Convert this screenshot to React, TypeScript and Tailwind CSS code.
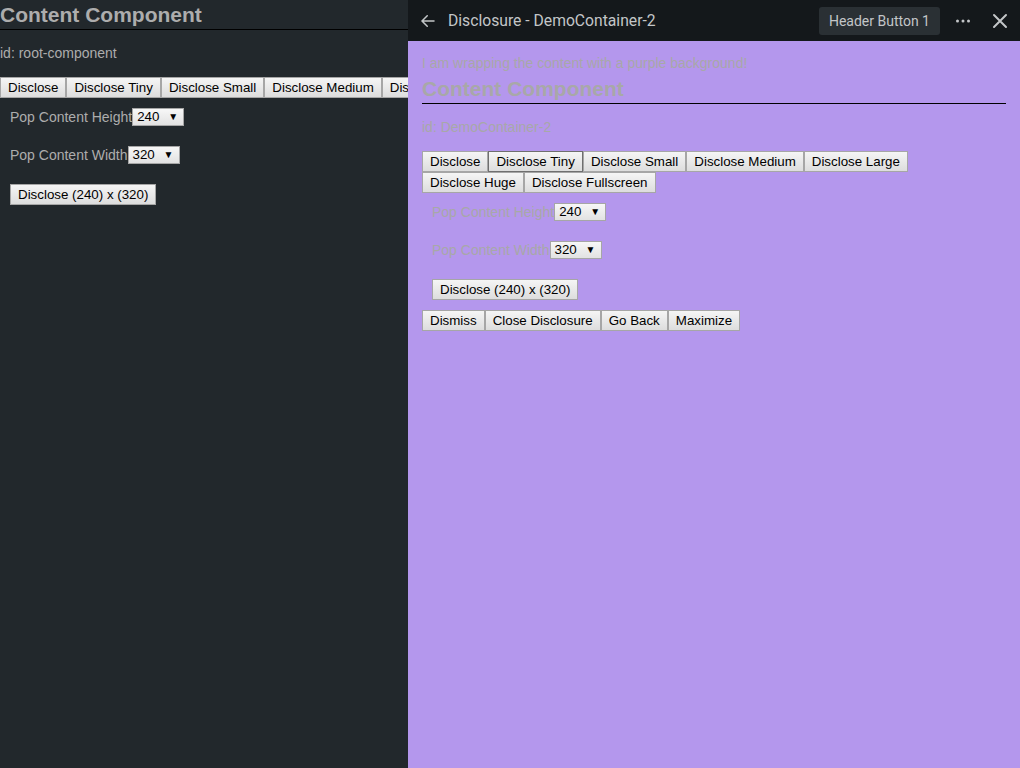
import { ReactNode } from "react";

// ─── Native-looking controls ─────────────────────────────────────────────────
function Btn({ children, focused = false }: { children: ReactNode; focused?: boolean }) {
  return (
    <button
      className={
        "h-[21px] shrink-0 whitespace-nowrap border bg-linear-to-b from-[#f5f5f5] to-[#dddddd] px-[7px] text-[13.33px] leading-[16px] text-black " +
        (focused ? "border-[#6f6f6f]" : "border-[#a6a6a6]")
      }
    >
      {children}
    </button>
  );
}

function FakeSelect({ value }: { value: string }) {
  return (
    <span className="flex h-[18px] w-[52px] items-center justify-between border border-[#a6a6a6] bg-linear-to-b from-[#f7f7f7] to-[#e2e2e2] pl-[4px] pr-[5px] text-[13.33px] leading-[16px] text-black">
      <span>{value}</span>
      <span className="text-[10px]">▼</span>
    </span>
  );
}

const ALL_BUTTONS = [
  "Disclose",
  "Disclose Tiny",
  "Disclose Small",
  "Disclose Medium",
  "Disclose Large",
  "Disclose Huge",
  "Disclose Fullscreen",
];

// ─── Content block (used on page and inside disclosure) ──────────────────────
function ContentComponent({ id, wrap, buttons }: { id: string; wrap: boolean; buttons: string[] }) {
  return (
    <div>
      <h2 className="border-b border-black pb-[2px] text-[21px] font-bold leading-[24px]">
        Content Component
      </h2>
      <p className="mt-[15px]">id: {id}</p>
      <div className={"mt-[16px] flex " + (wrap ? "flex-wrap" : "flex-nowrap")}>
        {buttons.map((b) => (
          <Btn key={b} focused={wrap && b === "Disclose Tiny"}>
            {b}
          </Btn>
        ))}
      </div>
      <div className="flex flex-col items-start gap-[20px] pl-[10px] pt-[10px]">
        <div className="flex items-center">
          <span>Pop Content Height</span>
          <FakeSelect value="240" />
        </div>
        <div className="flex items-center">
          <span>Pop Content Width</span>
          <FakeSelect value="320" />
        </div>
        <Btn>Disclose (240) x (320)</Btn>
      </div>
    </div>
  );
}

// ─── Header icons ────────────────────────────────────────────────────────────
function BackIcon() {
  return (
    <svg width="18" height="18" viewBox="0 0 24 24" fill="none" stroke="currentColor" strokeWidth="2" strokeLinecap="round">
      <path d="M20 12H4M11 5l-7 7 7 7" />
    </svg>
  );
}

function DotsIcon() {
  return (
    <svg width="16" height="16" viewBox="0 0 16 16" fill="currentColor">
      <circle cx="2.5" cy="8" r="1.5" />
      <circle cx="8" cy="8" r="1.5" />
      <circle cx="13.5" cy="8" r="1.5" />
    </svg>
  );
}

function CloseIcon() {
  return (
    <svg width="16" height="16" viewBox="0 0 16 16" fill="none" stroke="currentColor" strokeWidth="2" strokeLinecap="round">
      <path d="M2 2l12 12M14 2L2 14" />
    </svg>
  );
}

// ─── Main ────────────────────────────────────────────────────────────────────
export default function App() {
  return (
    <div className="flex h-[768px] w-[1020px] overflow-hidden bg-[#22282c] font-['Liberation_Sans',Arial,sans-serif] text-[14px] leading-[16px] text-[#adadad]">
      {/* underlying page — the disclosure covers everything past 408px */}
      <div className="w-[408px] shrink-0 overflow-hidden pt-[3px]">
        <ContentComponent id="root-component" wrap={false} buttons={ALL_BUTTONS.slice(0, 5)} />
      </div>

      {/* disclosure panel */}
      <div className="flex flex-1 flex-col bg-[#b497ed]">
        <div className="flex h-[41px] shrink-0 items-center bg-[#14181b] pl-[11px] pr-[12px] font-['Roboto',sans-serif] text-[#c3c6c8]">
          <span className="flex w-[18px] justify-center">
            <BackIcon />
          </span>
          <span className="ml-[11px] text-[15.7px]">Disclosure - DemoContainer-2</span>
          <span className="ml-auto rounded-[3px] bg-[#2a3034] px-[10px] py-[5px] text-[14px] leading-[18px]">
            Header Button 1
          </span>
          <span className="ml-[15px] flex w-[16px] justify-center">
            <DotsIcon />
          </span>
          <span className="ml-[21px] flex w-[16px] justify-center">
            <CloseIcon />
          </span>
        </div>

        <div className="flex-1 px-[14px] pt-[14px] text-[#a8a8a8]">
          <p>I am wrapping the content with a purple background!</p>
          <div className="mt-[6px]">
            <ContentComponent id="DemoContainer-2" wrap={true} buttons={ALL_BUTTONS} />
          </div>
          <div className="mt-[10px] flex">
            <Btn>Dismiss</Btn>
            <Btn>Close Disclosure</Btn>
            <Btn>Go Back</Btn>
            <Btn>Maximize</Btn>
          </div>
        </div>
      </div>
    </div>
  );
}
